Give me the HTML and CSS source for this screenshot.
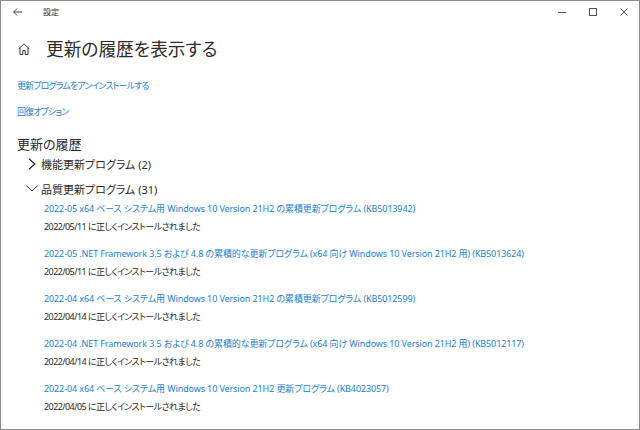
FILE: index.html
```html
<!DOCTYPE html>
<html lang="ja">
<head>
    <meta charset="UTF-8">
    <title>設定</title>
    <link rel="stylesheet" href="styles.css">
</head>
<body>
    <div class="window">
        <header class="titlebar">
            <div class="title-left">
                <svg class="back" width="9" height="8" viewBox="0 0 9 8"><path d="M4 .5.700 4 4 7.500M.700 4H9" fill="none" stroke="#333" stroke-width=".9"/></svg>
                <span class="app-name">設定</span>
            </div>
            <div class="controls">
                <svg width="8" height="8" viewBox="0 0 8 8"><path d="M0 4.500H8" stroke="#555"/></svg>
                <svg width="8" height="8" viewBox="0 0 8 8"><rect x=".5" y=".5" width="7" height="7" fill="none" stroke="#555"/></svg>
                <svg width="8" height="8" viewBox="0 0 8 8"><path d="M.5 .5 7.500 7.500M7.500 .5 .5 7.500" stroke="#555"/></svg>
            </div>
        </header>
        <main class="content">
            <div class="page-head">
                <svg class="home" width="12" height="12" viewBox="0 0 12 12"><path d="M.5 6 6 .8 11.500 6M2 4.800v6.700h2.800V7.500h2.400v4H10V4.800" fill="none" stroke="#333"/></svg>
                <h1>更新の履歴を表示する</h1>
            </div>
            <a class="link top-link">更新プログラムをアンインストールする</a>
            <a class="link top-link">回復オプション</a>
            <h2>更新の履歴</h2>
            <div class="group">
                <span class="chevron">
                    <svg width="8" height="12" viewBox="0 0 8 12"><path d="M1 .7 6.800 6 1 11.300" fill="none" stroke="#222" stroke-width="1.200"/></svg>
                </span>
                <span>機能更新プログラム (2)</span>
            </div>
            <div class="group">
                <span class="chevron">
                    <svg width="12" height="7" viewBox="0 0 12 7"><path d="M.5 .7 6 6 11.500 .7" fill="none" stroke="#333"/></svg>
                </span>
                <span>品質更新プログラム (31)</span>
            </div>
            <ul class="updates">
                <li><a class="link">2022-05 x64 ベース システム用 Windows 10 Version 21H2 の累積更新プログラム (KB5013942)</a><p>2022/05/11 に正しくインストールされました</p></li>
                <li><a class="link">2022-05 .NET Framework 3.5 および 4.8 の累積的な更新プログラム (x64 向け Windows 10 Version 21H2 用) (KB5013624)</a><p>2022/05/11 に正しくインストールされました</p></li>
                <li><a class="link">2022-04 x64 ベース システム用 Windows 10 Version 21H2 の累積更新プログラム (KB5012599)</a><p>2022/04/14 に正しくインストールされました</p></li>
                <li><a class="link">2022-04 .NET Framework 3.5 および 4.8 の累積的な更新プログラム (x64 向け Windows 10 Version 21H2 用) (KB5012117)</a><p>2022/04/14 に正しくインストールされました</p></li>
                <li><a class="link">2022-04 x64 ベース システム用 Windows 10 Version 21H2 更新プログラム (KB4023057)</a><p>2022/04/05 に正しくインストールされました</p></li>
                <li><a class="link">2022-03 x64 ベース システム用 Windows 10 Version 21H2 の累積更新プログラム (KB5011487)</a></li>
            </ul>
        </main>
    </div>
</body>
</html>
```

FILE: styles.css
```css
* {
    margin: 0;
    padding: 0;
    box-sizing: border-box;
}

html, body {
    height: 100%;
    overflow: hidden;
}

body {
    background-color: #fff;
    color: #2b2b2b;
    font-family: "Noto Sans", "Noto Sans CJK JP", sans-serif;
    font-feature-settings: "palt";
}

.window {
    height: 430px;
    overflow: hidden;
    border: 1px solid #8c8c8c;
}

.titlebar {
    display: flex;
    justify-content: space-between;
    align-items: center;
    height: 21px;
}

.title-left {
    display: flex;
    align-items: center;
    gap: 21px;
    padding-left: 12px;
}

.app-name {
    font-size: 8px;
}

.controls {
    display: flex;
    gap: 23px;
    padding-right: 11px;
}

.content {
    padding-left: 16px;
}

.page-head {
    display: flex;
    align-items: center;
    gap: 16px;
    height: 26px;
    margin-top: 13px;
    padding-left: 1px;
}

.home {
    margin-top: 2px;
}

h1 {
    font-size: 17.700px;
    font-weight: 400;
}

.link {
    display: block;
    color: #1a7fd4;
    font-size: 9px;
    line-height: 14px;
    letter-spacing: -.11px;
}

.top-link {
    margin-top: 12px;
    letter-spacing: -.9px;
}

.page-head + .top-link {
    margin-top: 18px;
}

h2 {
    margin-top: 18px;
    font-size: 13px;
    font-weight: 400;
    line-height: 14px;
}

.group {
    display: flex;
    align-items: center;
    height: 25px;
    font-size: 11px;
}

.chevron {
    display: flex;
    justify-content: center;
    width: 24px;
    padding-left: 6px;
}

.updates {
    list-style: none;
    margin-top: 1px;
    padding-left: 27px;
}

.updates li {
    height: 45px;
}

.updates p {
    margin-top: 4px;
    font-size: 9px;
    line-height: 14px;
    letter-spacing: -.58px;
}
```
